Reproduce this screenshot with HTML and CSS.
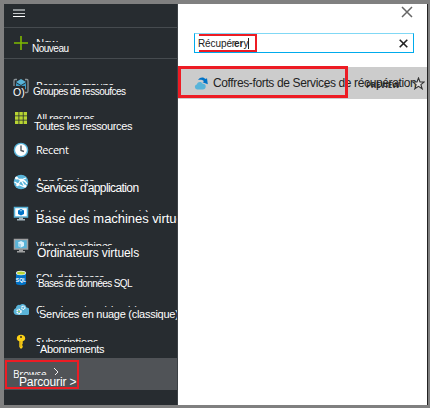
FILE: index.html
```html
<!DOCTYPE html>
<html lang="fr">
<head>
<meta charset="utf-8">
<title>Coffres-forts de Services de récupération</title>
<link rel="stylesheet" href="styles.css">
</head>
<body>
<div class="frame">
  <nav class="sidebar">
    <div class="menu">
      <svg width="12" height="9" viewBox="0 0 12 9"><path d="M0 1h12" stroke="#8b9093" stroke-width="2"/><path d="M0 4.5h12" stroke="#c5c8ca"/><path d="M0 7.5h12" stroke="#fff"/></svg>
    </div>
    <div class="new">
      <svg class="icon" width="16" height="16" viewBox="0 0 16 16"><path d="M8 1v14M1 8h14" stroke="#7fba00" stroke-width="1.6"/></svg>
      <span class="ghost">New</span><span class="label nouveau">Nouveau</span>
    </div>
    <div class="list">
      <div class="row">
        <svg class="icon" width="16" height="16" viewBox="0 0 16 16"><path d="M4 1.500H2Q1 1.500 1 3v10q0 1.500 1 1.500h2M12 1.500h2q1 0 1 1.500v10q0 1.500-1 1.500h-2" fill="none" stroke="#8b9397" stroke-width="1.300"/><path d="M8 1l5 3-5 3-5-3z" fill="#59b4d9"/><path d="M3 5l5 3v6l-5-3zM13 5L8 8v6l5-3z" fill="#3999c6"/></svg>
        <span class="ghost">Resource groups</span><span class="mark">O)</span><span class="label groupes">Groupes de ressoufces</span>
      </div>
      <div class="row">
        <svg class="icon" width="16" height="16" viewBox="0 0 16 16"><path d="M2 2h3.500v3.500H2zM6.300 2h3.500v3.500H6.300zM10.600 2H14v3.500h-3.400zM2 6.300h3.500v3.500H2zM6.300 6.300h3.500v3.500H6.300zM10.600 6.300H14v3.500h-3.400zM2 10.600h3.500V14H2zM6.300 10.600h3.500V14H6.300zM10.600 10.600H14V14h-3.400z" fill="#b8d432"/></svg>
        <span class="ghost">All resources</span><span class="label toutes">Toutes les ressources</span>
      </div>
      <div class="row">
        <svg class="icon" width="16" height="16" viewBox="0 0 16 16"><circle cx="8" cy="8" r="6.600" fill="#fff" stroke="#59b4d9" stroke-width="1.400"/><path d="M8 3.500V8.500l3 1" fill="none" stroke="#505860" stroke-width="1.400"/></svg>
        <span class="ghost recent">Recent</span>
      </div>
      <div class="row">
        <svg class="icon" width="16" height="16" viewBox="0 0 16 16"><circle cx="8" cy="8" r="7.300" fill="#59b4d9"/><path d="M3 4l5 2 4 7M8 6l5-2M8 6l-4 6M1.500 8q4 3 10 5M8 6q4 0 6 4" fill="none" stroke="#fff" stroke-width="1.300"/><circle cx="3.500" cy="4" r="1.500" fill="#fff"/><circle cx="8" cy="6" r="1.500" fill="#fff"/><circle cx="4.500" cy="11" r="1.300" fill="#fff"/><circle cx="12" cy="12" r="1.500" fill="#fff"/></svg>
        <span class="ghost">App Services</span><span class="label services">Services d'application</span>
      </div>
      <div class="row">
        <svg class="icon" width="16" height="16" viewBox="0 0 16 16"><path d="M1.500 1.500h13v9.500h-13z" fill="#fff" stroke="#59b4d9" stroke-width="1.500"/><path d="M6 11.500h4v1.500h2v1.500H4V13h2z" fill="#a8b8c0"/><path d="M8 3l3 1.600v3.400L8 9.600 5 8V4.600z" fill="#0072c6"/><path d="M8 4l1.500.8L8 5.600l-1.500-.8z" fill="#9dd3eb"/></svg>
        <span class="ghost">Virtual machines (classic)</span><span class="label base">Base des machines virtue</span>
      </div>
      <div class="row">
        <svg class="icon" width="16" height="16" viewBox="0 0 16 16"><path d="M1.500 1.500h13v9.500h-13z" fill="#59b4d9" stroke="#a0a1a2" stroke-width="1.500"/><path d="M6 11.500h4v1.500h2v1.500H4V13h2z" fill="#a0a1a2"/><path d="M8 3l3 1.600v3.400L8 9.600 5 8V4.600z" fill="#d9f0fa"/><path d="M8 6.200v3.400L5 8V4.800z" fill="#9dd3eb"/></svg>
        <span class="ghost">Virtual machines</span><span class="label ordinateurs">Ordinateurs virtuels</span>
      </div>
      <div class="row">
        <svg class="icon" width="16" height="16" viewBox="0 0 16 16"><path d="M3 3v10.500c0 2.300 10 2.300 10 0V3z" fill="#0072c6"/><ellipse cx="8" cy="3" rx="5" ry="2.200" fill="#e8f3f9"/><ellipse cx="8" cy="3" rx="4" ry="1.500" fill="#b8d432"/><text class="sql" x="8" y="11.500" text-anchor="middle">SQL</text></svg>
        <span class="ghost">SQL databases</span><span class="label bases">Bases de données SQL</span>
      </div>
      <div class="row">
        <svg class="icon" width="16" height="16" viewBox="0 0 16 16"><path d="M4 13a3.600 3.600 0 01-1-7 3 3 0 014-3 4 4 0 016.500 2.500 3.500 3.500 0 01-.5 7.500z" fill="#59b4d9"/><circle cx="6" cy="9.500" r="2" fill="none" stroke="#fff" stroke-width="1.500" stroke-dasharray="1.400 .6"/><circle cx="10.300" cy="5.700" r="1.600" fill="none" stroke="#fff" stroke-width="1.200" stroke-dasharray="1.200 .5"/><circle cx="6" cy="9.500" r=".8" fill="#b8d432"/></svg>
        <span class="ghost">Cloud services (classic)</span><span class="label nuage">Services en nuage (classique)</span>
      </div>
      <div class="row">
        <svg class="icon" width="16" height="16" viewBox="0 0 16 16"><path d="M8 .8C5.500.8 3.800 2.200 3.800 4.200c0 1.500 1 2.600 2.500 3.100V13L8 15l1.700-1.700v-1.500l-.9-.9.9-1V7.300c1.500-.5 2.500-1.600 2.500-3.100C12.200 2.200 10.500.8 8 .8z" fill="#fcd116"/><circle cx="8" cy="3" r="1" fill="#3a3420"/><path d="M7.800 7v6" stroke="#d09a10" stroke-width=".7"/></svg>
        <span class="ghost">Subscriptions</span><span class="label abonnements">Abonnements</span>
      </div>
    </div>
    <div class="row browse">
      <span class="ghost">Browse</span>
      <svg class="chevron" width="6" height="8" viewBox="0 0 6 8"><path d="M1 0l4 4-4 4" fill="none" stroke="#eee"/></svg>
      <span class="label parcourir">Parcourir &gt;</span>
      <i class="outline"></i>
    </div>
  </nav>
  <main class="panel">
    <header class="top"><svg width="12" height="12" viewBox="0 0 12 12"><path d="M1 1l10 10M11 1L1 11" stroke="#666" stroke-width="1.500"/></svg></header>
    <div class="search">
      <span class="query">Récupér<b>er</b>y</span><i class="caret"></i>
      <svg class="clear" width="9" height="9" viewBox="0 0 9 9"><path d="M.7.7l7.600 7.600M8.300.7L.7 8.300" stroke="#222" stroke-width="1.600"/></svg>
      <i class="outline"></i>
    </div>
    <div class="result">
      <svg class="vault" width="15" height="13" viewBox="0 0 15 13"><path d="M4 3c2-3.500 6-3 7.500-1L13 1.200l.8 6-5.300-2 1.500-1C8.500 2.800 6.500 2.700 4 3z" fill="#0072c6"/><path d="M3 12.500a2.700 2.700 0 010-5.300C3.500 4.500 7.500 4 8.700 6.700c2 0 3 1 3 2.800s-1.200 3-3 3z" fill="#59b4d9"/></svg>
      <span class="tail">s</span><span class="preview">PREVIEW</span>
      <span class="name">Coffres-forts de Services de récupération</span>
      <svg class="star" width="13" height="13" viewBox="0 0 13 13"><path d="M6.500 1l1.500 4h4.200L8.900 7.600l1.300 4.200-3.700-2.500-3.700 2.500 1.300-4.200L.8 5H5z" fill="#ddd" stroke="#333" stroke-width="1.100"/></svg>
      <i class="outline"></i>
    </div>
  </main>
</div>
</body>
</html>
```
FILE: styles.css
```css
* { box-sizing: border-box; }
body { margin: 0; background: #808080; font-family: "Liberation Sans", Arial, sans-serif; }
.frame { display: flex; width: 430px; height: 408px; padding: 4px 1px 3px 4px; }
.sidebar { width: 174px; flex: none; background: #272c30; color: #fff; overflow: hidden; border-right: 1px solid #3c4145; }
.menu { height: 24px; padding: 5px 9px; border-bottom: 1px solid #464b4f; }
.menu svg { display: block; }
.new { position: relative; display: flex; align-items: center; height: 31px; padding-left: 9px; gap: 7px; border-bottom: 1px solid #464b4f; }
.list { padding-top: 11px; }
.row { position: relative; display: flex; align-items: center; height: 32px; padding-left: 9px; gap: 7px; }
.icon { flex: none; }
.ghost { font: 11px/16px "Open Sans", "Noto Sans", sans-serif; white-space: nowrap; letter-spacing: -.6px; }
.recent { letter-spacing: -.45px; }
.label, .mark { position: absolute; line-height: 14px; height: 14px; white-space: nowrap; background: #272c30; }
.mark { left: 9px; top: 16px; font-size: 10.500px; height: 12px; line-height: 12px; }
.nouveau { left: 28px; top: 14px; font-size: 10px; letter-spacing: -.5px; height: 11px; }
.groupes { left: 29px; top: 15px; font-size: 10px; letter-spacing: -.52px; }
.toutes { left: 30px; top: 17px; font-size: 11px; letter-spacing: -.4px; }
.services { left: 32px; top: 15px; font-size: 12px; letter-spacing: -.6px; }
.base { left: 32px; top: 14px; font-size: 13px; letter-spacing: -.05px; }
.ordinateurs { left: 33px; top: 16px; font-size: 12px; letter-spacing: -.1px; }
.bases { left: 34px; top: 15px; font-size: 10px; letter-spacing: -.58px; }
.nuage { left: 35px; top: 13px; font-size: 11px; letter-spacing: -.27px; }
.abonnements { left: 36px; top: 16px; font-size: 11px; letter-spacing: -.35px; }
.browse { background: #505357; }
.browse .ghost { font-size: 10px; letter-spacing: -.2px; }
.browse .chevron { margin: -4px 0 0 -1px; }
.parcourir { left: 15px; top: 17px; font-size: 12px; letter-spacing: -.15px; background: #505357; }
.sql { font: bold 5px "Liberation Sans", sans-serif; fill: #fff; }
.outline { position: absolute; border: 3px solid #ed1c24; }
.browse .outline { left: 1px; top: 2px; width: 74px; height: 29px; border-width: 2px; }
.panel { width: 250px; flex: none; background: #fff; border-right: 1px solid #222; }
.top { display: flex; justify-content: flex-end; height: 29px; padding: 2px 14px 0 0; }
.search { position: relative; display: flex; align-items: center; width: 220px; height: 20px; margin-left: 16px; padding-left: 3px; border: 1px solid #00abec; border-top-color: #80d8f5; }
.query { font-size: 10px; letter-spacing: -.1px; color: #222; }
.query b { margin-left: -1px; }
.caret { width: 1px; height: 11px; background: #222; }
.clear { margin: 0 5px 0 auto; }
.search .outline { left: 4px; top: 0; width: 58px; height: 18px; border-width: 2px; border-left: 0; }
.result { position: relative; display: flex; align-items: center; height: 32px; margin-top: 14px; padding-left: 16px; background: #ccc; }
.vault { flex: none; }
.name { position: relative; margin-left: 4px; font-size: 12px; letter-spacing: -.37px; white-space: nowrap; color: #222; }
.preview, .tail, .star { position: absolute; }
.preview { left: 188px; top: 13px; font: bold 8px/10px "Open Sans", sans-serif; letter-spacing: -.2px; color: #333; }
.tail { left: 146px; top: 12px; font: 9px/12px "Open Sans", sans-serif; color: #333; }
.star { left: 234px; top: 10px; }
.result .outline { left: 0; top: -1px; width: 170px; height: 32px; }
```
